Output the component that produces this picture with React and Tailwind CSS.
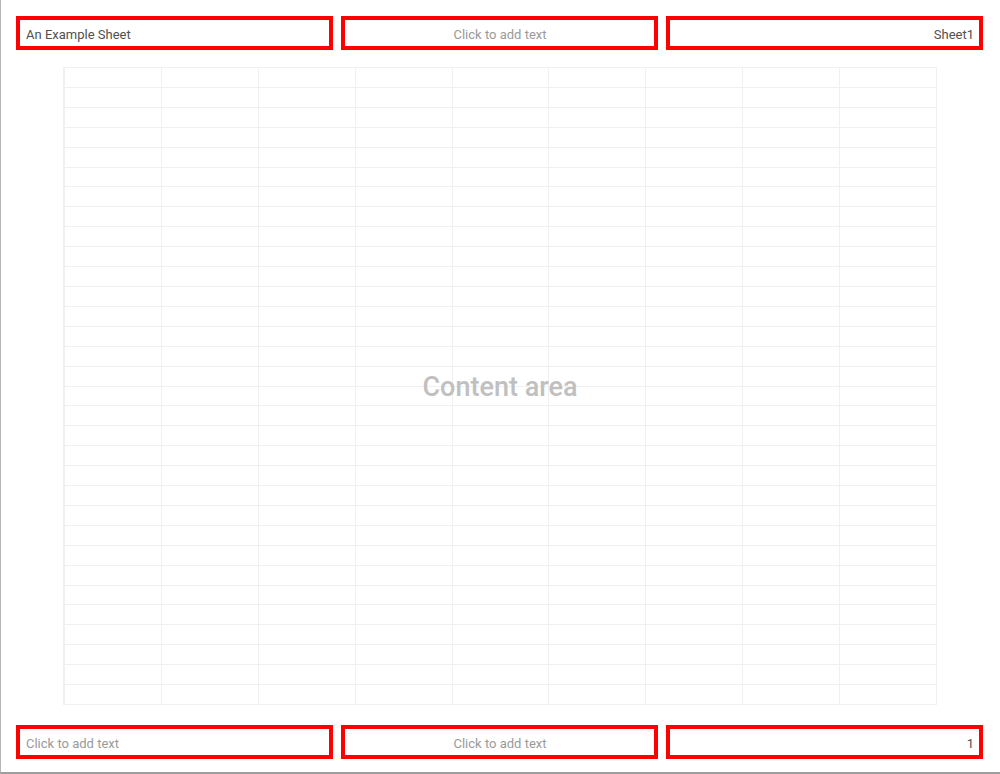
import React from 'react';

const font = { fontFamily: 'Roboto, "Noto Sans", sans-serif' };

function HeaderBox({ children, align = 'left', muted = false }) {
  const alignClass = align === 'center' ? 'justify-center' : align === 'right' ? 'justify-end' : 'justify-start';
  return (
    <div
      className={`flex-1 h-[34px] border-4 border-[#ff0000] bg-white flex items-center pt-[3px] pl-[6px] pr-[5px] text-[13px] ${alignClass} ${
        muted ? 'text-[#9a9a9a]' : 'text-[#505050]'
      }`}
    >
      {children}
    </div>
  );
}

export default function App() {
  const cells = Array.from({ length: 32 * 9 });

  return (
    <div
      className="w-[1000px] h-[774px] bg-white border-l border-b-2 border-l-[#b5b5b5] border-b-[#9e9e9e] flex flex-col overflow-hidden"
      style={font}
    >
      <div className="flex gap-[8px] pl-[15px] pr-[17px] pt-[16px]">
        <HeaderBox>An Example Sheet</HeaderBox>
        <HeaderBox align="center" muted>Click to add text</HeaderBox>
        <HeaderBox align="right">Sheet1</HeaderBox>
      </div>

      <div className="flex-1 pt-[17px] pb-[20px] pl-[62px] pr-[63px]">
        <div className="relative h-full">
          <div className="grid grid-cols-9 grid-rows-[repeat(32,minmax(0,1fr))] h-full border-l-2 border-t border-[#f0f0f0]">
            {cells.map((_, i) => (
              <div key={i} className="border-r border-b border-[#f0f0f0]" />
            ))}
          </div>
          <div className="absolute inset-0 flex items-center justify-center pt-[2px] pointer-events-none">
            <span className="text-[27px] font-medium text-[#c0c0c0]">Content area</span>
          </div>
        </div>
      </div>

      <div className="flex gap-[8px] pl-[15px] pr-[17px] pb-[13px]">
        <HeaderBox muted>Click to add text</HeaderBox>
        <HeaderBox align="center" muted>Click to add text</HeaderBox>
        <HeaderBox align="right">1</HeaderBox>
      </div>
    </div>
  );
}
